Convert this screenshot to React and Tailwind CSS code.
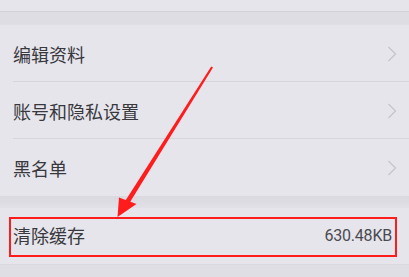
import React from 'react';

const Chevron = () => (
  <svg width="10" height="16" viewBox="0 0 10 16" fill="none" className="shrink-0">
    <path d="M1.5 1 L8.5 8 L1.5 15" stroke="#c6c5cd" strokeWidth="1.3" />
  </svg>
);

const Row = ({ label, right, divider = true }) => (
  <div className="relative h-[57px] flex items-center justify-between pl-[13px] pr-[12px] bg-[#e6e5ec]">
    <span className="text-[18px] text-[#38383d] leading-none">{label}</span>
    {right}
    {divider && <div className="absolute bottom-0 left-[13px] right-0 h-px bg-[#d6d5dc]" />}
  </div>
);

export default function App() {
  return (
    <div
      className="relative w-[409px] h-[277px] overflow-hidden bg-[#e6e5ec]"
      style={{ fontFamily: '"Noto Sans CJK SC", "Noto Sans", sans-serif' }}
    >
      {/* tail of previous group */}
      <div className="h-[12px] bg-[#e6e5ec] border-b border-[#d3d2d9]" />
      <div className="h-[12px] bg-[#dedde4]" />

      <div className="flex flex-col">
        <div className="h-px bg-[#e0dfe6]" />
        <Row label="编辑资料" right={<Chevron />} />
        <Row label="账号和隐私设置" right={<Chevron />} />
        <Row label="黑名单" right={<Chevron />} divider={false} />
      </div>

      <div className="h-[12px] bg-gradient-to-b from-[#dad9e0] to-[#e1e0e7]" />

      <div className="relative h-[57px] flex items-center justify-between pl-[13px] pr-[17px] bg-[#e6e5ec] border-b border-[#dad9e0]">
        <span className="text-[18px] text-[#38383d] leading-none -mt-[3px]">清除缓存</span>
        <span
          className="text-[16px] text-[#4a4a50] leading-none tracking-[-0.2px]"
          style={{ fontFamily: 'Roboto, "Liberation Sans", sans-serif' }}
        >
          630.48KB
        </span>
      </div>
      <div className="h-[12px] bg-[#dfdee5]" />

      {/* annotation: red box */}
      <div className="absolute left-[9px] top-[217px] w-[388px] h-[40px] border-2 border-[#ff1c1c]" />

      {/* annotation: red arrow */}
      <svg className="absolute left-0 top-0 pointer-events-none" width="409" height="277" viewBox="0 0 409 277">
        <polygon points="211.2,66.6 213,67.6 129.5,203 125.5,200.6" fill="#ff1c1c" />
        <polygon points="117.5,217 119,197.5 136.5,204" fill="#ff1c1c" />
      </svg>
    </div>
  );
}
